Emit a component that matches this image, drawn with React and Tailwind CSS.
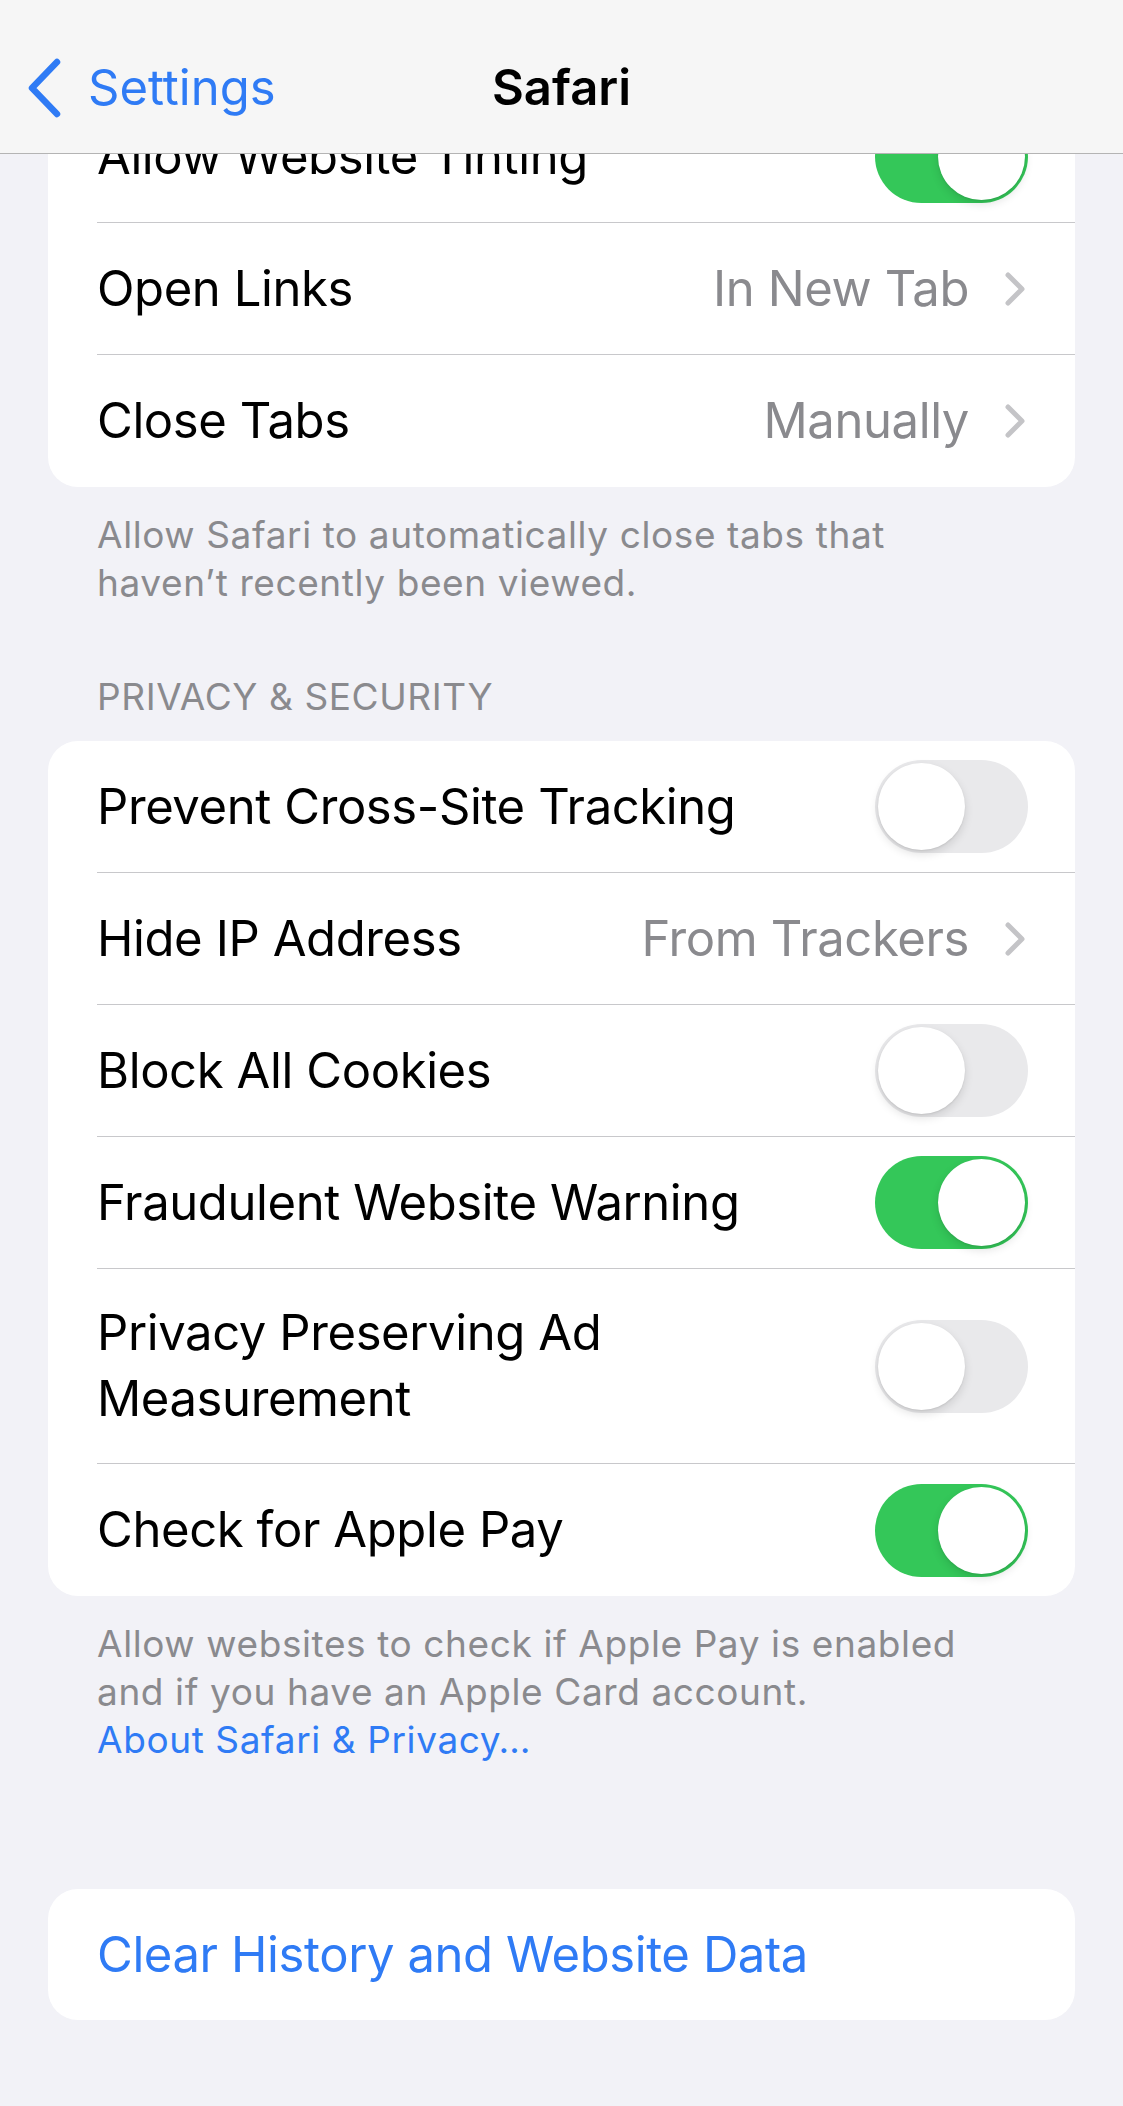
import React from "react";

const FONT = { fontFamily: 'Inter, "Noto Sans", "Liberation Sans", sans-serif' };

function Toggle({ on }) {
  return (
    <div
      className={
        "relative w-[153px] h-[93px] rounded-full shrink-0 " +
        (on ? "bg-[#34c759]" : "bg-[#e9e9eb]")
      }
    >
      <div
        className={
          "absolute top-[3px] w-[87px] h-[87px] rounded-full bg-white shadow-[0_4px_10px_rgba(0,0,0,0.12),0_1px_2px_rgba(0,0,0,0.08)] " +
          (on ? "left-[63px]" : "left-[3px]")
        }
      />
    </div>
  );
}

function Chevron() {
  return (
    <svg width="22" height="36" viewBox="0 0 22 36" className="shrink-0">
      <polyline
        points="4,4 18,18 4,32"
        fill="none"
        stroke="#c4c4c7"
        strokeWidth="5"
        strokeLinecap="round"
        strokeLinejoin="round"
      />
    </svg>
  );
}

function Row({ label, value, toggle, last, twoLine }) {
  return (
    <div className="flex pl-[49px]">
      <div
        className={
          "flex-1 flex items-center " +
          (twoLine ? "py-[31px] " : "h-[132px] ") +
          (last ? "" : "border-b border-[#c8c8cb] ") +
          (toggle !== undefined ? "pr-[47px]" : "pr-[49px]")
        }
      >
        <div className="flex-1 text-black text-[49px] leading-[66px] tracking-[-0.4px]">
          {label}
        </div>
        {value !== undefined && (
          <div className="flex items-center gap-[35px]">
            <span className="text-[49px] leading-[66px] tracking-[-0.4px] text-[#8a8a8e]">
              {value}
            </span>
            <Chevron />
          </div>
        )}
        {toggle !== undefined && <Toggle on={toggle} />}
      </div>
    </div>
  );
}

function Footer({ children }) {
  return (
    <div className="px-[97px] pt-[24px] text-[37px] leading-[48px] tracking-[0.6px] text-[#8a8a8e]">
      {children}
    </div>
  );
}

export default function App() {
  return (
    <div
      className="relative w-[1123px] h-[2106px] bg-[#f2f2f7] overflow-hidden"
      style={FONT}
    >
      {/* Navigation bar overlay */}
      <div className="absolute top-0 left-0 right-0 h-[154px] bg-[#f6f6f6] border-b border-[#b4b4b4] z-10 pt-[22px] grid grid-cols-[1fr_auto_1fr] items-center">
        <div className="flex items-center pl-[26px] gap-[26px]">
          <svg width="36" height="60" viewBox="0 0 36 60">
            <polyline
              points="31,4 6,30 31,56"
              fill="none"
              stroke="#2f7bf5"
              strokeWidth="6.5"
              strokeLinecap="round"
              strokeLinejoin="round"
            />
          </svg>
          <span className="text-[49px] leading-[60px] text-[#2f7bf5]">
            Settings
          </span>
        </div>
        <div className="text-[49px] leading-[60px] font-semibold text-black">
          Safari
        </div>
        <div />
      </div>

      <div className="pt-[91px]">
        {/* Card 1 */}
        <div className="mx-[48px] bg-white rounded-[30px]">
          <Row label="Allow Website Tinting" toggle={true} />
          <Row label="Open Links" value="In New Tab" />
          <Row label="Close Tabs" value="Manually" last />
        </div>
        <Footer>
          <div>Allow Safari to automatically close tabs that</div>
          <div>haven’t recently been viewed.</div>
        </Footer>

        <div className="px-[97px] pt-[66px] pb-[20px] text-[37px] leading-[48px] tracking-[0.6px] text-[#8a8a8e]">
          PRIVACY &amp; SECURITY
        </div>

        {/* Card 2 */}
        <div className="mx-[48px] bg-white rounded-[30px]">
          <Row label="Prevent Cross-Site Tracking" toggle={false} />
          <Row label="Hide IP Address" value="From Trackers" />
          <Row label="Block All Cookies" toggle={false} />
          <Row label="Fraudulent Website Warning" toggle={true} />
          <Row
            twoLine
            label={
              <>
                <div>Privacy Preserving Ad</div>
                <div>Measurement</div>
              </>
            }
            toggle={false}
          />
          <Row label="Check for Apple Pay" toggle={true} last />
        </div>
        <Footer>
          <div>Allow websites to check if Apple Pay is enabled</div>
          <div>and if you have an Apple Card account.</div>
          <div className="text-[#2f7bf5]">About Safari &amp; Privacy…</div>
        </Footer>

        {/* Card 3 */}
        <div className="mx-[48px] mt-[125px] bg-white rounded-[30px]">
          <div className="h-[131px] flex items-center pl-[49px] text-[49px] leading-[66px] tracking-[-0.4px] text-[#2f7bf5]">
            Clear History and Website Data
          </div>
        </div>
      </div>
    </div>
  );
}
